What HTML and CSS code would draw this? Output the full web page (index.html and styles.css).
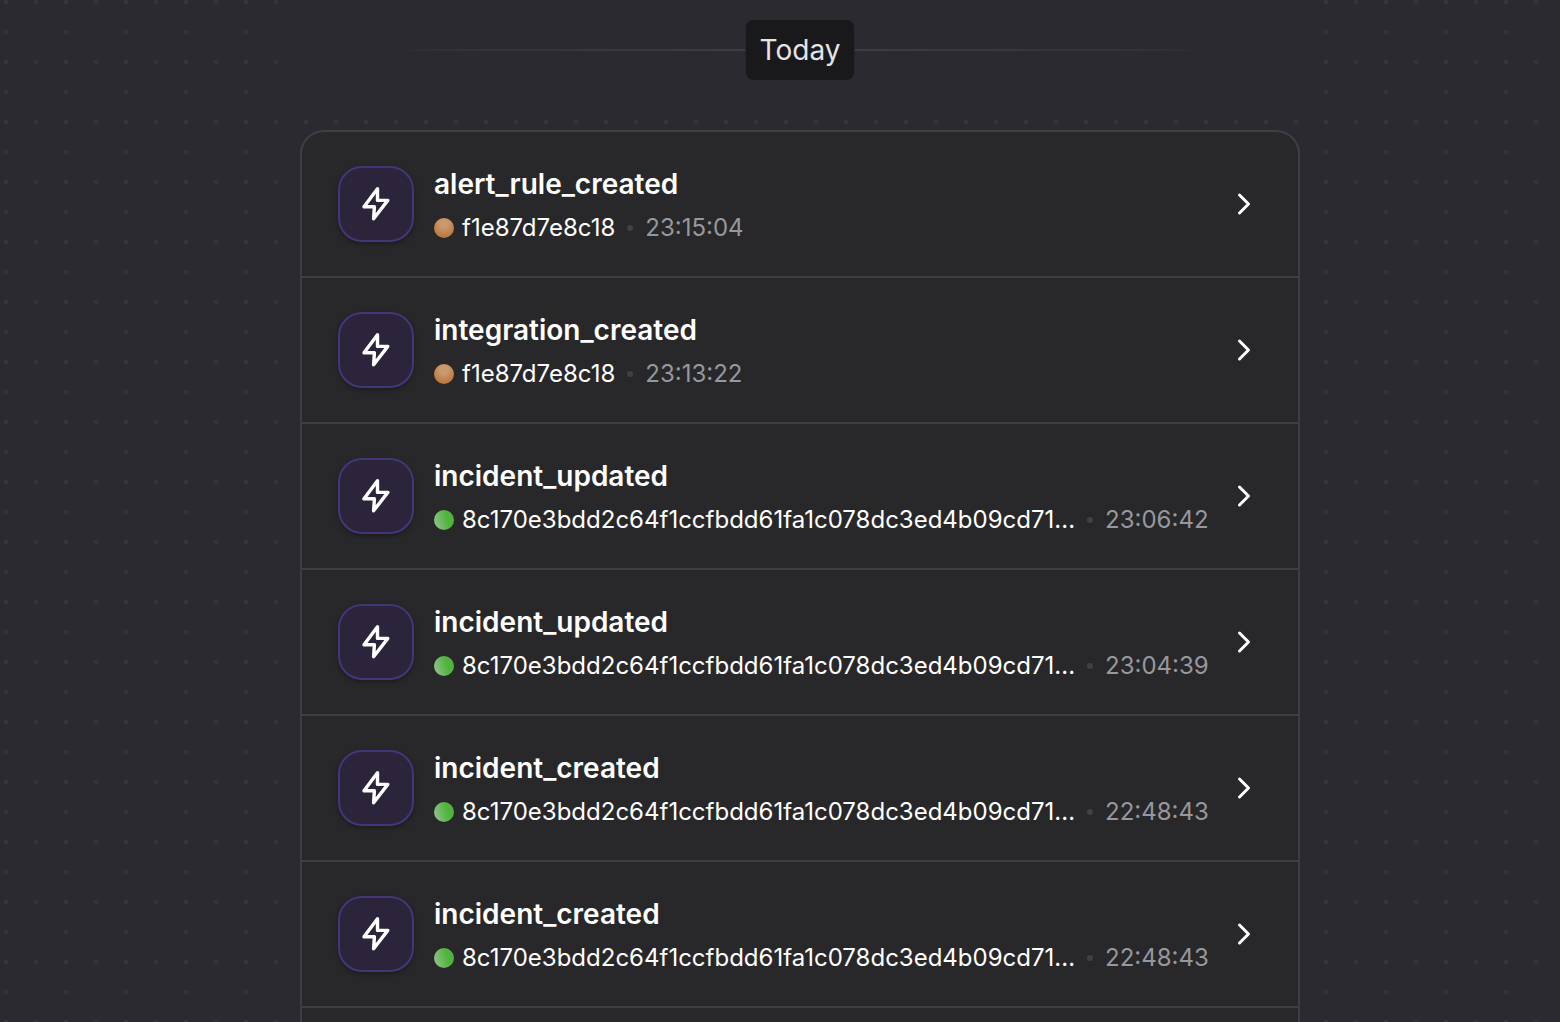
FILE: index.html
```
<!DOCTYPE html>
<html lang="en">
  <head>
    <meta charset="UTF-8" />
    <meta name="viewport" content="width=device-width, initial-scale=1.0" />
    <title>Activity</title>
    <link rel="stylesheet" href="styles.css">
  </head>
  <body>
    <!-- shared icons -->
    <svg class="sprite" aria-hidden="true">
      <symbol id="bolt" viewBox="0 0 40 40">
        <path d="M21.5 4.8 8 22.8h10.4L17.6 34.8 31.8 16.4H21.5z" />
      </symbol>
      <symbol id="chevron" viewBox="0 0 24 24">
        <path d="m9 18 6-6-6-6" />
      </symbol>
    </svg>

    <main class="page">
      <header class="day">
        <span class="line line-left"></span>
        <h2 class="day-label">Today</h2>
        <span class="line line-right"></span>
      </header>

      <ul class="events">
        <li>
          <a class="event" href="#">
            <span class="event-icon"><svg><use href="#bolt" /></svg></span>
            <div class="event-body">
              <h3 class="event-name">alert_rule_created</h3>
              <p class="event-meta">
                <span class="avatar orange"></span>
                <span class="event-user">f1e87d7e8c18</span>
                <span class="dot"></span>
                <time>23:15:04</time>
              </p>
            </div>
            <svg class="chevron"><use href="#chevron" /></svg>
          </a>
        </li>
        <li>
          <a class="event" href="#">
            <span class="event-icon"><svg><use href="#bolt" /></svg></span>
            <div class="event-body">
              <h3 class="event-name">integration_created</h3>
              <p class="event-meta">
                <span class="avatar orange"></span>
                <span class="event-user">f1e87d7e8c18</span>
                <span class="dot"></span>
                <time>23:13:22</time>
              </p>
            </div>
            <svg class="chevron"><use href="#chevron" /></svg>
          </a>
        </li>
        <li>
          <a class="event" href="#">
            <span class="event-icon"><svg><use href="#bolt" /></svg></span>
            <div class="event-body">
              <h3 class="event-name">incident_updated</h3>
              <p class="event-meta">
                <span class="avatar green"></span>
                <span class="event-user">8c170e3bdd2c64f1ccfbdd61fa1c078dc3ed4b09cd71...</span>
                <span class="dot"></span>
                <time>23:06:42</time>
              </p>
            </div>
            <svg class="chevron"><use href="#chevron" /></svg>
          </a>
        </li>
        <li>
          <a class="event" href="#">
            <span class="event-icon"><svg><use href="#bolt" /></svg></span>
            <div class="event-body">
              <h3 class="event-name">incident_updated</h3>
              <p class="event-meta">
                <span class="avatar green"></span>
                <span class="event-user">8c170e3bdd2c64f1ccfbdd61fa1c078dc3ed4b09cd71...</span>
                <span class="dot"></span>
                <time>23:04:39</time>
              </p>
            </div>
            <svg class="chevron"><use href="#chevron" /></svg>
          </a>
        </li>
        <li>
          <a class="event" href="#">
            <span class="event-icon"><svg><use href="#bolt" /></svg></span>
            <div class="event-body">
              <h3 class="event-name">incident_created</h3>
              <p class="event-meta">
                <span class="avatar green"></span>
                <span class="event-user">8c170e3bdd2c64f1ccfbdd61fa1c078dc3ed4b09cd71...</span>
                <span class="dot"></span>
                <time>22:48:43</time>
              </p>
            </div>
            <svg class="chevron"><use href="#chevron" /></svg>
          </a>
        </li>
        <li>
          <a class="event" href="#">
            <span class="event-icon"><svg><use href="#bolt" /></svg></span>
            <div class="event-body">
              <h3 class="event-name">incident_created</h3>
              <p class="event-meta">
                <span class="avatar green"></span>
                <span class="event-user">8c170e3bdd2c64f1ccfbdd61fa1c078dc3ed4b09cd71...</span>
                <span class="dot"></span>
                <time>22:48:43</time>
              </p>
            </div>
            <svg class="chevron"><use href="#chevron" /></svg>
          </a>
        </li>
      </ul>
    </main>
  </body>
</html>
```
FILE: styles.css
```
* {
  box-sizing: border-box;
}
body {
  margin: 0;
  color: #fff;
  font-family: Inter, "Liberation Sans", sans-serif;
  background-color: #2b2a30;
  /* one tile is 60px: dots at (6,2), (36,2) and (6,32) */
  background-image:
    radial-gradient(circle at 6px 2px, #39383e 1px, transparent 3px),
    radial-gradient(circle at 36px 2px, #36353b 1px, transparent 3px),
    radial-gradient(circle at 6px 32px, #36353b 1px, transparent 3px);
  background-size: 60px 60px;
}
h2,
h3,
p,
ul {
  margin: 0;
  padding: 0;
}
.sprite {
  display: none;
}
.page {
  display: flex;
  flex-direction: column;
  min-height: 100vh;
  padding: 0 260px 0 300px;
}
.day {
  display: flex;
  align-items: center;
  height: 100px;
  padding: 0 100px;
  margin-bottom: 30px;
  background-color: #2b2a30;
}
.line {
  flex: 1;
  height: 2px;
}
.line-left {
  background: linear-gradient(to right, transparent, #323136 10%, #3e3d42);
}
.line-right {
  background: linear-gradient(to left, transparent, #323136 10%, #3e3d42);
}
.day-label {
  margin: 0 1px;
  padding: 10px 14px;
  border-radius: 8px;
  background-color: #19191b;
  box-shadow: 0 0 0 1px #29282d;
  color: #e4e4e7;
  font-size: 28px;
  font-weight: 400;
  line-height: 40px;
}
.events {
  flex: 1;
  list-style: none;
  border: 2px solid #3f3f43;
  border-bottom: none;
  border-radius: 24px 24px 0 0;
  background-color: #28282a;
}
.events li {
  border-bottom: 2px solid #3f3f43;
}
.event {
  display: flex;
  align-items: center;
  padding: 32px 36px;
  color: inherit;
  text-decoration: none;
}
.event-icon {
  display: flex;
  align-items: center;
  justify-content: center;
  flex-shrink: 0;
  width: 76px;
  height: 76px;
  margin-right: 20px;
  border: 2px solid #44367a;
  border-radius: 24px;
  background-color: #2b243b;
  box-shadow: 0 2px 4px rgba(0, 0, 0, 0.3);
}
.event-icon svg {
  width: 40px;
  height: 40px;
  fill: none;
  stroke: #fff;
  stroke-width: 3.4;
  stroke-linejoin: round;
}
.event-body {
  flex: 1;
  min-width: 0;
}
.event-name {
  margin-bottom: 8px;
  font-size: 28px;
  font-weight: 600;
  line-height: 40px;
}
.event-meta {
  display: flex;
  align-items: center;
  font-size: 24px;
  line-height: 32px;
  white-space: nowrap;
}
.avatar {
  flex-shrink: 0;
  width: 20px;
  height: 20px;
  margin-right: 8px;
  border-radius: 50%;
}
.avatar.orange {
  background: radial-gradient(circle at 50% 30%, #c99a70 20%, #b97a3c 75%);
}
.avatar.green {
  background: linear-gradient(75deg, #8bbd85 15%, #4fb53a 65%);
}
.event-user {
  overflow: hidden;
}
.dot {
  flex-shrink: 0;
  width: 6px;
  height: 6px;
  margin: 0 12px;
  border-radius: 50%;
  background-color: #414145;
}
.event time {
  color: #97979d;
}
.chevron {
  flex-shrink: 0;
  width: 36px;
  height: 36px;
  margin-left: 16px;
  fill: none;
  stroke: #fff;
  stroke-width: 2;
  stroke-linecap: round;
  stroke-linejoin: round;
}
```
